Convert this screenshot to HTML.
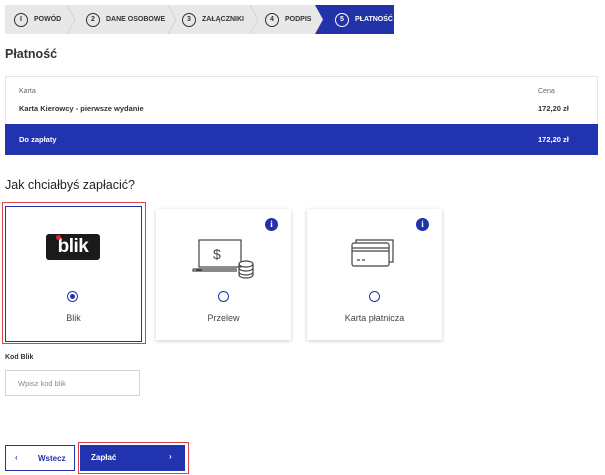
<!DOCTYPE html>
<html><head><meta charset="utf-8"><style>
*{box-sizing:border-box;margin:0;padding:0}
body{width:605px;height:475px;background:#fff;font-family:"Liberation Sans",sans-serif;color:#222;position:relative;overflow:hidden}
.a{position:absolute}
.steps{left:5px;top:5px;width:389px;height:29px;background:#e8e8e8}
.st{position:absolute;top:0;height:29px;display:flex;align-items:center;font-size:7px;font-weight:bold;color:#333;font-family:"Liberation Sans Narrow","Liberation Sans",sans-serif}
.st .c{width:14px;height:14px;border:1.3px solid #333;border-radius:50%;display:flex;align-items:center;justify-content:center;font-size:7px;margin-right:6px}
.card{background:#fff;box-shadow:0 1px 4px rgba(0,0,0,.2)}
.radio{width:11px;height:11px;border:1.3px solid #2233aa;border-radius:50%}
.lbl{font-size:9px;color:#444;width:100%;text-align:center}
.info{width:13px;height:13px;border-radius:50%;background:#2233aa;color:#fff;font-size:9px;font-weight:bold;text-align:center;line-height:13px;font-family:"Liberation Serif",serif}
</style></head><body>
<div class="a steps">
 <svg class="a" style="left:0;top:0" width="389" height="29">
  <polyline points="62,0 70,14.5 62,29" fill="none" stroke="#d4d4d4"/>
  <polyline points="163,0 171,14.5 163,29" fill="none" stroke="#d4d4d4"/>
  <polyline points="245,0 253,14.5 245,29" fill="none" stroke="#d4d4d4"/>
  <polygon points="310,0 389,0 389,29 310,29 318,14.5" fill="#2233aa"/>
 </svg>
 <div class="st" style="left:9px"><span class="c">I</span>POWÓD</div>
 <div class="st" style="left:81px"><span class="c">2</span>DANE OSOBOWE</div>
 <div class="st" style="left:177px"><span class="c">3</span>ZAŁĄCZNIKI</div>
 <div class="st" style="left:260px"><span class="c">4</span>PODPIS</div>
 <div class="st" style="left:330px;color:#fff"><span class="c" style="border-color:#fff">5</span>PŁATNOŚĆ</div>
</div>
<div class="a" style="left:5px;top:47px;font-size:12.5px;font-weight:bold;color:#333">Płatność</div>
<div class="a" style="left:5px;top:76px;width:593px;height:79px;border:1px solid #e6e6e6"></div>
<div class="a" style="left:19px;top:88px;font-size:7px;color:#666">Karta</div>
<div class="a" style="left:538px;top:88px;font-size:7px;color:#666">Cena</div>
<div class="a" style="left:19px;top:104px;font-size:7.5px;font-weight:bold;color:#333">Karta Kierowcy - pierwsze wydanie</div>
<div class="a" style="left:538px;top:104px;font-size:7.5px;font-weight:bold;color:#333">172,20 zł</div>
<div class="a" style="left:5px;top:124px;width:593px;height:31px;background:#2233b0"></div>
<div class="a" style="left:19px;top:135px;font-size:7.5px;font-weight:bold;color:#fff">Do zapłaty</div>
<div class="a" style="left:538px;top:135px;font-size:7.5px;font-weight:bold;color:#fff">172,20 zł</div>
<div class="a" style="left:5px;top:178px;font-size:12.5px;color:#222">Jak chciałbyś zapłacić?</div>

<div class="a" style="left:2px;top:202px;width:144px;height:142px;border:1.5px solid #d9434a"></div>
<div class="a card" style="left:5px;top:206px;width:137px;height:136px;border:1.3px solid #2233aa;box-shadow:none">
 <div class="a" style="left:40px;top:27px;width:54px;height:26px;background:#1a1a1a;border-radius:3px;color:#fff;font-weight:bold;font-size:19px;text-align:center;line-height:26px;letter-spacing:-.5px">blik</div>
 <div class="a" style="left:50px;top:28px;width:5px;height:5px;border-radius:50%;background:#e0203a"></div>
 <div class="a radio" style="left:61px;top:84px;display:flex;align-items:center;justify-content:center"><div style="width:5px;height:5px;border-radius:50%;background:#2233aa"></div></div>
 <div class="a lbl" style="top:106px">Blik</div>
</div>

<div class="a card" style="left:156px;top:209px;width:135px;height:131px">
 <div class="a info" style="left:109px;top:9px">i</div>
 <svg class="a" style="left:36px;top:30px" width="62" height="40" fill="none" stroke="#444" stroke-width="1.2">
  <rect x="7" y="1" width="42" height="27"/><path d="M1,30 H45 M1,30 V32 H45"/><path d="M4,31 h6"/>
  <text x="21" y="20" font-size="14" fill="#444" stroke="none" font-family="Liberation Sans">$</text>
  <ellipse cx="54" cy="25" rx="7" ry="3" fill="#fff"/><path d="M47,25 V36 M61,25 V36 M47,29 a7,3 0 0 0 14,0 M47,33 a7,3 0 0 0 14,0 M47,36 a7,3 0 0 0 14,0"/>
 </svg>
 <div class="a radio" style="left:62px;top:82px"></div>
 <div class="a lbl" style="top:104px">Przelew</div>
</div>

<div class="a card" style="left:307px;top:209px;width:135px;height:131px">
 <div class="a info" style="left:109px;top:9px">i</div>
 <svg class="a" style="left:44px;top:30px" width="48" height="30" fill="none" stroke="#444" stroke-width="1.2">
  <rect x="1" y="4" width="37" height="23" rx="2"/><path d="M5,4 V1 H42 V23 H38"/><path d="M1,9 H38 M1,12 H38 M6,21 h3 M11,21 h3"/>
 </svg>
 <div class="a radio" style="left:62px;top:82px"></div>
 <div class="a lbl" style="top:104px">Karta płatnicza</div>
</div>

<div class="a" style="left:5px;top:354px;font-size:7px;font-weight:bold;color:#333">Kod Blik</div>
<div class="a" style="left:5px;top:370px;width:135px;height:26px;border:1px solid #d4d4d4;font-size:7.5px;color:#888;padding:8px 0 0 12px">Wpisz kod blik</div>

<div class="a" style="left:5px;top:445px;width:70px;height:26px;border:1.3px solid #2233aa;font-size:8px;font-weight:bold;color:#2233aa">
 <span class="a" style="left:9px;top:7px">‹</span><span class="a" style="left:32px;top:8px">Wstecz</span></div>
<div class="a" style="left:78px;top:442px;width:111px;height:32px;border:1.5px solid #d9434a"></div>
<div class="a" style="left:80px;top:445px;width:105px;height:26px;background:#2233b0;font-size:8px;font-weight:bold;color:#fff">
 <span class="a" style="left:11px;top:8px">Zapłać</span><span class="a" style="left:89px;top:7px">›</span></div>
</body></html>
